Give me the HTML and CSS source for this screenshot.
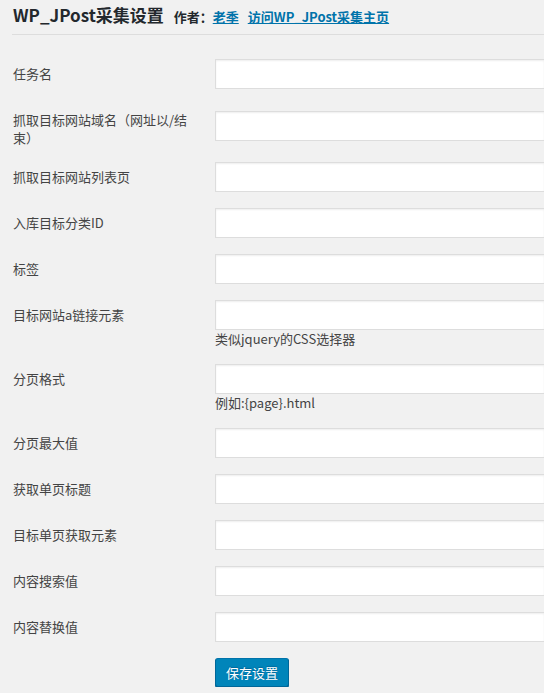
FILE: index.html
```html
<!DOCTYPE html>
<html lang="zh-CN">
<head>
  <meta charset="UTF-8">
  <title>WP_JPost采集设置</title>
  <link rel="stylesheet" href="styles.css">
</head>
<body>

<div class="wrap">
  <h2 class="page-title">WP_JPost采集设置
    <span class="meta">作者：<a href="#">老季</a><a href="#" class="home-link">访问WP_JPost采集主页</a></span>
  </h2>

  <form class="jpost-form">
    <table class="form-table">
      <tr>
        <th>任务名</th>
        <td><input type="text" class="regular-text"></td>
      </tr>
      <tr>
        <th>抓取目标网站域名（网址以/结束）</th>
        <td><input type="text" class="regular-text"></td>
      </tr>
      <tr>
        <th>抓取目标网站列表页</th>
        <td><input type="text" class="regular-text"></td>
      </tr>
      <tr>
        <th>入库目标分类ID</th>
        <td><input type="text" class="regular-text"></td>
      </tr>
      <tr>
        <th>标签</th>
        <td><input type="text" class="regular-text"></td>
      </tr>
      <tr>
        <th>目标网站a链接元素</th>
        <td>
          <input type="text" class="regular-text">
          <p class="description">类似jquery的CSS选择器</p>
        </td>
      </tr>
      <tr>
        <th>分页格式</th>
        <td>
          <input type="text" class="regular-text">
          <p class="description">例如:{page}.html</p>
        </td>
      </tr>
      <tr>
        <th>分页最大值</th>
        <td><input type="text" class="regular-text"></td>
      </tr>
      <tr>
        <th>获取单页标题</th>
        <td><input type="text" class="regular-text"></td>
      </tr>
      <tr>
        <th>目标单页获取元素</th>
        <td><input type="text" class="regular-text"></td>
      </tr>
      <tr>
        <th>内容搜索值</th>
        <td><input type="text" class="regular-text"></td>
      </tr>
      <tr>
        <th>内容替换值</th>
        <td><input type="text" class="regular-text"></td>
      </tr>
    </table>
    <p class="submit">
      <button type="button" class="button-primary">保存设置</button>
    </p>
  </form>
</div>

</body>
</html>
```

FILE: styles.css
```css
* {
  margin: 0;
  padding: 0;
  box-sizing: border-box;
}

body {
  background: #f1f1f1;
  color: #444;
  font-family: "Noto Sans CJK SC", sans-serif;
  font-size: 13px;
}

.wrap {
  padding-left: 12px;
}

.page-title {
  font-size: 17px;
  font-weight: 700;
  color: #23282d;
  line-height: 24px;
  padding: 3px 0 5px 1px;
  border-bottom: 1px solid #ddd;
}

.meta {
  font-size: 13px;
  margin-left: 6px;
  color: #23282d;
}

.meta a {
  color: #0073aa;
}

.meta .home-link {
  margin-left: 9px;
}

.jpost-form {
  margin-top: 16px;
}

/* input runs into the right edge of the window, like the admin screen */
.form-table {
  width: 100%;
  table-layout: fixed;
  border-collapse: collapse;
}

.form-table th {
  width: 193px;
  padding: 14px 13px 7px 1px;
  line-height: 18px;
  font-weight: 400;
  text-align: left;
  vertical-align: top;
}

.form-table td {
  padding: 8px 0 8px 10px;
  vertical-align: middle;
}

.regular-text {
  display: block;
  width: 100%;
  height: 30px;
  background: #fff;
  border: 1px solid #ddd;
  border-right: 0;
  box-shadow: inset 0 1px 2px rgba(0, 0, 0, 0.07);
  outline: none;
  font-family: inherit;
  font-size: 13px;
  padding: 0 8px;
}

.description {
  line-height: 18px;
  color: #444;
}

.submit {
  padding-left: 203px;
  padding-top: 8px;
}

.button-primary {
  height: 29px;
  padding: 0 10px;
  background: #0085ba;
  border: 1px solid;
  border-color: #0073aa #006799 #006799;
  border-radius: 3px;
  box-shadow: 0 1px 0 #006799;
  color: #fff;
  font-family: inherit;
  font-size: 13px;
  text-shadow: 0 -1px 1px #006799;
}
```
